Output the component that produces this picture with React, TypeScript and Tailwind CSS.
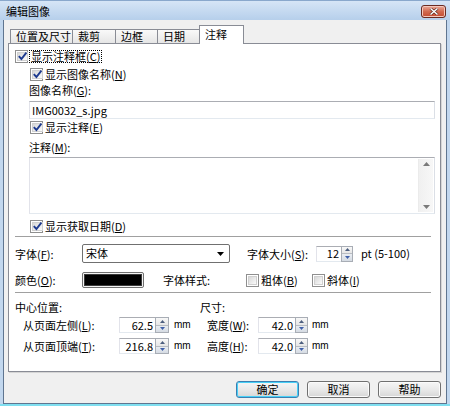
import React from "react";

const FONT = '"Noto Sans CJK SC", "Liberation Sans", sans-serif';

function U({ c }: { c: string }) {
  return <span className="underline underline-offset-[1px]">{c}</span>;
}

function Check({ checked }: { checked?: boolean }) {
  return (
    <span className="w-[13px] h-[13px] shrink-0 border border-[#8f8f8f] bg-white p-[1px] flex">
      <span className="flex-1 bg-gradient-to-br from-[#d8d8d8] to-[#fbfbfb] border border-[#d0d0d0] flex items-center justify-center overflow-visible">
        {checked && (
          <svg width="9" height="9" viewBox="0 0 9 9" className="overflow-visible">
            <path d="M0.8 4.2 L3.4 7 L8.4 0.6" fill="none" stroke="#1d3a8f" strokeWidth="1.9" />
          </svg>
        )}
      </span>
    </span>
  );
}

function SpinBtn({ w }: { w: string }) {
  return (
    <div className={`${w} h-full flex flex-col border border-[#a8adb5] bg-[#f2f2f2]`}>
      <div className="flex-1 flex items-center justify-center bg-gradient-to-b from-[#f8f8f8] to-[#e6e6e6] border-b border-[#b8bcc2]">
        <svg width="5" height="3" viewBox="0 0 5 3"><path d="M0 3 L2.5 0 L5 3 Z" fill="#4c5e7e" /></svg>
      </div>
      <div className="flex-1 flex items-center justify-center bg-gradient-to-b from-[#e9edf2] to-[#d5dbe3]">
        <svg width="5" height="3" viewBox="0 0 5 3"><path d="M0 0 L2.5 3 L5 0 Z" fill="#3f5fa8" /></svg>
      </div>
    </div>
  );
}

function Field({ value, w }: { value: string; w: string }) {
  return (
    <div className={`${w} h-full border border-[#abadb3] border-r-0 border-b-[#e3e9ef] border-l-[#e2e3ea] bg-white flex items-center justify-end pr-[2px] text-[11px] leading-none`}>
      {value}
    </div>
  );
}

function Tab({ label, w, selected }: { label: string; w: string; selected?: boolean }) {
  if (selected)
    return (
      <div className={`${w} h-[19px] relative top-[1px] z-10 -ml-[1px] bg-white border border-b-0 border-[#898c95] pl-[5px] pt-[2px] text-[11px] leading-[13px]`}>
        {label}
      </div>
    );
  return (
    <div className={`${w} h-[14px] bg-gradient-to-b from-[#f9f9f9] to-[#e6e6e6] border border-b-0 border-r-0 border-[#898c95] pl-[5px] text-[11px] leading-[13px]`}>
      {label}
    </div>
  );
}

function Button({ label, focus }: { label: string; focus?: boolean }) {
  return (
    <div
      className={`w-[63px] h-[17px] rounded-[3px] border ${
        focus ? "border-[#3c7fb1] shadow-[inset_0_0_0_1px_#48d0f7]" : "border-[#707070] shadow-[inset_0_0_0_1px_#fbfbfb]"
      } bg-gradient-to-b from-[#f6f6f6] via-[#e9e9e9] to-[#d6d6d6] flex items-center justify-center text-[11px] leading-none`}
    >
      {label}
    </div>
  );
}

function Mm({ cls }: { cls: string }) {
  return (
    <span className={`${cls} text-[10px] font-medium leading-none text-black`} style={{ fontFamily: '"Liberation Sans", sans-serif' }}>
      mm
    </span>
  );
}

export default function App() {
  return (
    <div
      className="w-[450px] h-[406px] flex flex-col bg-[#c2d7ee] border-b-2 border-b-[#7fdff0] text-black overflow-hidden"
      style={{ fontFamily: FONT }}
    >
      {/* title bar */}
      <div className="h-[20px] shrink-0 flex items-center justify-between bg-gradient-to-b from-[#d6e5f6] to-[#b6cfeb] border-t border-[#8aa8cc] pl-[6px] pr-[4px]">
        <span className="text-[11px] leading-none pt-[2px]">编辑图像</span>
        <div className="w-[25px] h-[13px] mt-[1px] rounded-[3px] border border-[#6b2b22] bg-gradient-to-b from-[#e9a99a] via-[#d26a50] to-[#c34a30] flex items-center justify-center shadow-[inset_0_0_0_1px_#f4c8bc]">
          <svg width="10" height="7" viewBox="0 0 10 7">
            <path d="M1.5 0.5 L8.5 6.5 M8.5 0.5 L1.5 6.5" stroke="#4a1a12" strokeWidth="2.6" />
            <path d="M1.5 0.5 L8.5 6.5 M8.5 0.5 L1.5 6.5" stroke="#ffffff" strokeWidth="1.5" />
          </svg>
        </div>
      </div>

      {/* content */}
      <div className="flex-1 mx-[3px] border border-t-0 border-[#5f7590] bg-[#f0f0f0] flex flex-col">
        {/* tabs */}
        <div className="mt-[5px] ml-[6px] h-[18px] flex items-end">
          <Tab label="位置及尺寸" w="w-[62px]" />
          <Tab label="裁剪" w="w-[43px]" />
          <Tab label="边框" w="w-[42px]" />
          <Tab label="日期" w="w-[43px]" />
          <Tab label="注释" w="w-[45px]" selected />
        </div>

        {/* panel */}
        <div className="ml-[4px] w-[433px] h-[329px] bg-white border border-[#898c95] shadow-[1px_1px_0_#d5d5d5] flex flex-col pl-[6px] pr-[5px] text-[11px] leading-[12px]">
          <div className="mt-[6px] h-[13px] flex items-center">
            <Check checked />
            <span className="ml-[1px] h-[13px] border border-dotted border-black px-[1px] flex items-center leading-none">
              显示注释框(<U c="C" />)
            </span>
          </div>
          <div className="mt-[5px] ml-[15px] h-[13px] flex items-center gap-[2px]">
            <Check checked />
            <span className="leading-none">
              显示图像名称(<U c="N" />)
            </span>
          </div>
          <div className="mt-[3px] ml-[14px] h-[12px] leading-[12px]">
            图像名称(<U c="G" />):
          </div>
          <div className="mt-[5px] ml-[14px] h-[18px] border border-[#abadb3] border-l-[#e2e3ea] border-r-[#dbdfe6] border-b-[#e3e9ef] flex items-center pl-[2px] leading-none">
            IMG0032_s.jpg
          </div>
          <div className="mt-[2px] ml-[15px] h-[13px] flex items-center gap-[2px]">
            <Check checked />
            <span className="leading-none">
              显示注释(<U c="E" />)
            </span>
          </div>
          <div className="mt-[7px] ml-[14px] h-[12px] leading-[12px]">
            注释(<U c="M" />):
          </div>
          <div className="mt-[4px] ml-[14px] h-[57px] border border-[#abadb3] border-l-[#e2e3ea] border-r-[#dbdfe6] border-b-[#e3e9ef] p-[1px] flex justify-end">
            <div className="w-[15px] h-full bg-gradient-to-r from-[#f0f0f0] to-[#f7f7f7] border-l border-[#ebebeb] flex flex-col justify-between items-center py-[3px]">
              <svg width="7" height="4" viewBox="0 0 7 4"><path d="M0 4 L3.5 0 L7 4 Z" fill="#7a7a7a" /></svg>
              <svg width="7" height="4" viewBox="0 0 7 4"><path d="M0 0 L3.5 4 L7 0 Z" fill="#7a7a7a" /></svg>
            </div>
          </div>
          <div className="mt-[6px] ml-[15px] h-[13px] flex items-center gap-[2px]">
            <Check checked />
            <span className="leading-none">
              显示获取日期(<U c="D" />)
            </span>
          </div>
          <div className="mt-[3px] w-[416px] h-px bg-[#a0a0a0]" />

          {/* font row */}
          <div className="mt-[7px] h-[19px] flex items-center">
            <span className="w-[67px]">
              字体(<U c="F" />):
            </span>
            <div className="w-[148px] h-[19px] rounded-[2px] border border-[#707070] bg-white flex items-center justify-between pl-[3px] pr-[5px]">
              <span className="leading-none">宋体</span>
              <svg width="7" height="4" viewBox="0 0 7 4"><path d="M0 0 L3.5 4 L7 0 Z" fill="#000" /></svg>
            </div>
            <span className="ml-[17px] w-[69px]">
              字体大小(<U c="S" />):
            </span>
            <div className="h-[16px] flex">
              <Field value="12" w="w-[25px]" />
              <SpinBtn w="w-[12px]" />
            </div>
            <span className="ml-[8px] leading-none">pt (5-100)</span>
          </div>

          {/* colour row */}
          <div className="mt-[9px] h-[16px] flex items-center">
            <span className="w-[67px]">
              颜色(<U c="O" />):
            </span>
            <div className="w-[62px] h-[16px] rounded-[2px] border border-[#707070] bg-[#f4f4f4] p-[1px]">
              <div className="w-full h-full bg-black border border-[#3a3a3a]" />
            </div>
            <span className="ml-[19px] w-[83px]">字体样式:</span>
            <div className="w-[66px] flex items-center gap-[2px]">
              <Check />
              <span className="leading-none">
                粗体(<U c="B" />)
              </span>
            </div>
            <div className="flex items-center gap-[2px]">
              <Check />
              <span className="leading-none">
                斜体(<U c="I" />)
              </span>
            </div>
          </div>
          <div className="mt-[4px] w-[416px] h-px bg-[#a0a0a0]" />

          <div className="mt-[8px] h-[12px] flex leading-[12px]">
            <span className="w-[185px]">中心位置:</span>
            <span>尺寸:</span>
          </div>

          <div className="mt-[4px] ml-[8px] h-[16px] flex items-center">
            <span className="w-[96px]">
              从页面左侧(<U c="L" />):
            </span>
            <div className="h-[16px] flex">
              <Field value="62.5" w="w-[36px]" />
              <SpinBtn w="w-[14px]" />
            </div>
            <Mm cls="ml-[5px] w-[33px]" />
            <span className="w-[51px]">
              宽度(<U c="W" />):
            </span>
            <div className="h-[16px] flex">
              <Field value="42.0" w="w-[37px]" />
              <SpinBtn w="w-[13px]" />
            </div>
            <Mm cls="ml-[4px]" />
          </div>

          <div className="mt-[5px] ml-[8px] h-[16px] flex items-center">
            <span className="w-[96px]">
              从页面顶端(<U c="T" />):
            </span>
            <div className="h-[16px] flex">
              <Field value="216.8" w="w-[36px]" />
              <SpinBtn w="w-[14px]" />
            </div>
            <Mm cls="ml-[5px] w-[33px]" />
            <span className="w-[51px]">
              高度(<U c="H" />):
            </span>
            <div className="h-[16px] flex">
              <Field value="42.0" w="w-[37px]" />
              <SpinBtn w="w-[13px]" />
            </div>
            <Mm cls="ml-[4px]" />
          </div>
        </div>

        {/* buttons */}
        <div className="mt-[9px] pr-[5px] flex justify-end gap-[8px]">
          <Button label="确定" focus />
          <Button label="取消" />
          <Button label="帮助" />
        </div>
      </div>
    </div>
  );
}
